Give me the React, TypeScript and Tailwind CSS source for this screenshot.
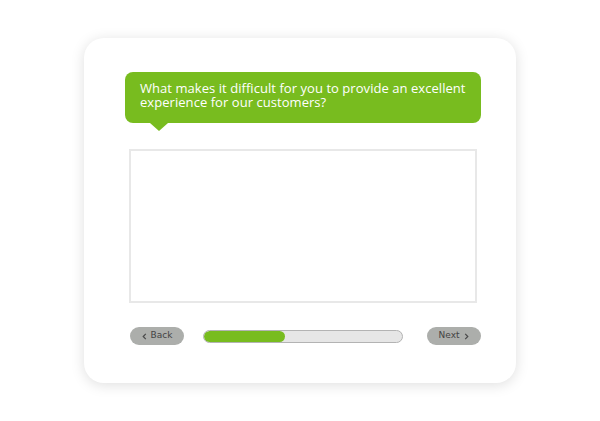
import React from 'react'

const Chevron = ({ dir }: { dir: 'left' | 'right' }) => (
  <svg width="5" height="7" viewBox="0 0 5 7" className="shrink-0">
    <path
      d={dir === 'left' ? 'M3.8 0.8 L1.2 3.5 L3.8 6.2' : 'M1.2 0.8 L3.8 3.5 L1.2 6.2'}
      fill="none"
      stroke="#4a4a4a"
      strokeWidth="1.2"
    />
  </svg>
)

const App = () => {
  const progress = 41

  return (
    <div className="w-[600px] h-[421px] bg-white pt-[38px] pl-[84px]">
      <div className="w-[432px] h-[345px] bg-white rounded-[20px] shadow-[0_2px_14px_rgba(0,0,0,0.13)] pt-[34px] pl-[41px]">
        <div className="relative w-[356px] h-[51px] bg-[#78bc1f] rounded-[8px] pl-[15px] pt-[10px]">
          <p className="text-white text-[13px] leading-[13.5px] tracking-[0.05px] font-['Open_Sans',sans-serif]">
            What makes it difficult for you to provide an excellent experience for our customers?
          </p>
          <div className="absolute left-[25px] -bottom-[8px] w-0 h-0 border-l-[9px] border-r-[9px] border-t-[8px] border-l-transparent border-r-transparent border-t-[#78bc1f]" />
        </div>

        <div className="ml-[4px] mt-[26px] w-[348px] h-[154px] border-2 border-[#e8e8e8] bg-white" />

        <div className="flex items-center ml-[5px] mt-[24px] w-[351px]">
          <button className="w-[54px] h-[18px] rounded-full bg-[#acaeab] flex items-center justify-center gap-[4px] font-['DejaVu_Sans',sans-serif] text-[9px] text-[#444]">
            <Chevron dir="left" />
            <span>Back</span>
          </button>
          <div className="ml-[19px] w-[200px] h-[13px] rounded-full border border-[#b3b3b3] bg-[#e6e6e6] overflow-hidden">
            <div className="h-full bg-[#78bc1f] rounded-full" style={{ width: `${progress}%` }} />
          </div>
          <button className="ml-auto w-[54px] h-[18px] rounded-full bg-[#acaeab] flex items-center justify-center gap-[5px] font-['DejaVu_Sans',sans-serif] text-[9px] text-[#444]">
            <span>Next</span>
            <Chevron dir="right" />
          </button>
        </div>
      </div>
    </div>
  )
}

export default App
